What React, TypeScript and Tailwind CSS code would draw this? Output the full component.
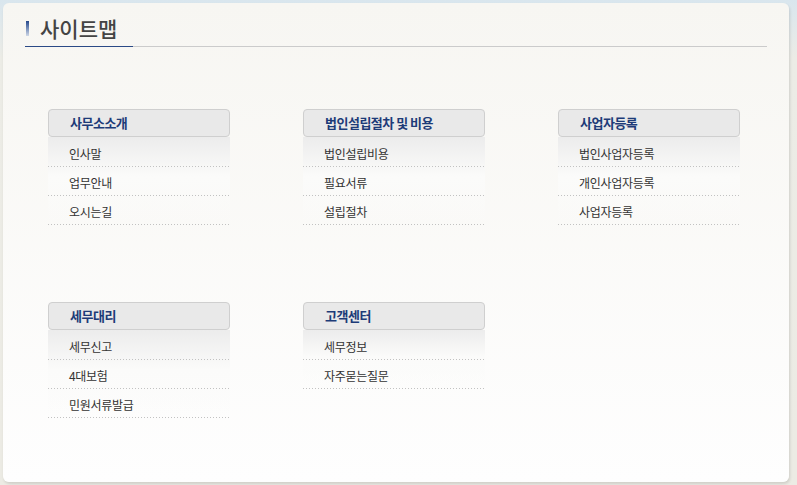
const SECTIONS: { title: string; items: string[] }[] = [
  { title: '사무소소개', items: ['인사말', '업무안내', '오시는길'] },
  { title: '법인설립절차 및 비용', items: ['법인설립비용', '필요서류', '설립절차'] },
  { title: '사업자등록', items: ['법인사업자등록', '개인사업자등록', '사업자등록'] },
  { title: '세무대리', items: ['세무신고', '4대보험', '민원서류발급'] },
  { title: '고객센터', items: ['세무정보', '자주묻는질문'] },
];

function Section({ title, items }: { title: string; items: string[] }) {
  return (
    <div className="w-[182px]">
      <div className="flex h-[28px] items-center rounded-[4px] border border-[#cfcfcf] bg-[#e9e9e9] pl-[21px] text-[13px] font-bold tracking-[-0.5px] text-[#1d3b78]">
        {title}
      </div>
      <div className="bg-gradient-to-b from-[#ececec] via-[#fbfbfa] via-[45%] to-transparent pt-[1px]">
        {items.map((it) => (
          <div
            key={it}
            className="flex h-[29px] items-center bg-[repeating-linear-gradient(to_right,#c2c2c2_0_1px,transparent_1px_3px)] bg-[length:100%_1px] bg-bottom bg-no-repeat pl-[21px] pt-[2px] text-[12px] tracking-[-0.3px] text-[#333]"
          >
            {it}
          </div>
        ))}
      </div>
    </div>
  );
}

export default function App() {
  return (
    <div
      className="h-[485px] w-[797px] bg-gradient-to-b from-[#d9e6ee] via-[#ecece6] via-[12%] to-[#ecebe4] p-[3px] pr-[8px] pb-[3px]"
      style={{ fontFamily: '"Noto Sans CJK KR", "Noto Sans", sans-serif' }}
    >
      <div className="h-[479px] rounded-[6px] bg-gradient-to-b from-[#f7f6f2] to-[#fefefe] px-[22px] pt-[12px] shadow-[1px_2px_3px_rgba(0,0,0,0.12)]">
        <div className="flex items-center border-b border-[#cbcbcb] pb-[5px]">
          <div className="relative flex items-center pl-[1px]">
            <span className="h-[15px] w-[3px] bg-gradient-to-b from-[#27498c] to-[#d0d8e6]" />
            <h1 className="ml-[11px] text-[21px] font-medium leading-[26px] text-[#444]">사이트맵</h1>
            <span className="absolute bottom-[-6px] left-0 h-[1px] w-[108px] bg-[#2b4a86]" />
          </div>
        </div>
        <div className="grid grid-cols-[182px_182px_182px] gap-x-[73px] gap-y-[77px] pl-[23px] pt-[62px]">
          {SECTIONS.map((s) => (
            <Section key={s.title} {...s} />
          ))}
        </div>
      </div>
    </div>
  );
}
